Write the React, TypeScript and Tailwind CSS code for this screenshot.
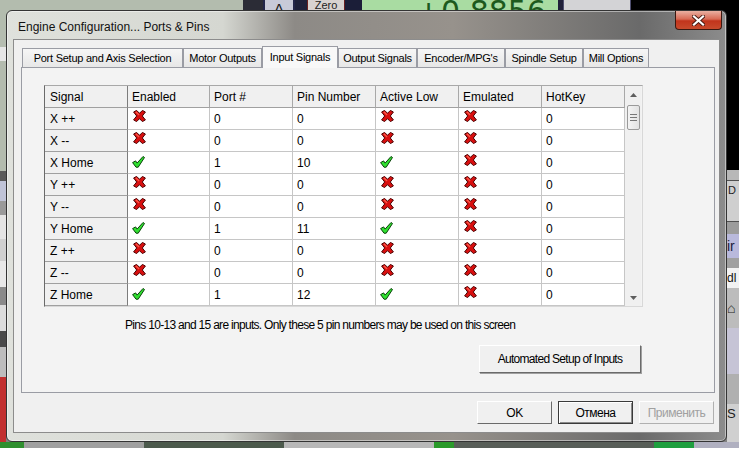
import React from "react";

type Row = {
  signal: string;
  enabled: boolean;
  port: number;
  pin: number;
  activeLow: boolean;
  emulated: boolean;
  hotKey: number;
};

const rows: Row[] = [
  { signal: "X ++", enabled: false, port: 0, pin: 0, activeLow: false, emulated: false, hotKey: 0 },
  { signal: "X --", enabled: false, port: 0, pin: 0, activeLow: false, emulated: false, hotKey: 0 },
  { signal: "X Home", enabled: true, port: 1, pin: 10, activeLow: true, emulated: false, hotKey: 0 },
  { signal: "Y ++", enabled: false, port: 0, pin: 0, activeLow: false, emulated: false, hotKey: 0 },
  { signal: "Y --", enabled: false, port: 0, pin: 0, activeLow: false, emulated: false, hotKey: 0 },
  { signal: "Y Home", enabled: true, port: 1, pin: 11, activeLow: true, emulated: false, hotKey: 0 },
  { signal: "Z ++", enabled: false, port: 0, pin: 0, activeLow: false, emulated: false, hotKey: 0 },
  { signal: "Z --", enabled: false, port: 0, pin: 0, activeLow: false, emulated: false, hotKey: 0 },
  { signal: "Z Home", enabled: true, port: 1, pin: 12, activeLow: true, emulated: false, hotKey: 0 },
];

const tabs = [
  { name: "Port Setup and Axis Selection", w: "w-[161px]" },
  { name: "Motor Outputs", w: "w-[79px]" },
  { name: "Input Signals", w: "w-[76px]", active: true },
  { name: "Output Signals", w: "w-[79px]" },
  { name: "Encoder/MPG's", w: "w-[88px]" },
  { name: "Spindle Setup", w: "w-[78px]" },
  { name: "Mill Options", w: "w-[66px]" },
];

const columns = [
  { label: "Signal", w: "w-[83px]" },
  { label: "Enabled", w: "w-[82px]" },
  { label: "Port #", w: "w-[83px]" },
  { label: "Pin Number", w: "w-[83px]" },
  { label: "Active Low", w: "w-[83px]" },
  { label: "Emulated", w: "w-[83px]" },
  { label: "HotKey", w: "w-[83px]" },
];

const RedX = () => (
  <svg width="13" height="12" viewBox="0 0 13 12">
    <polygon
      points="0.6,2 3.6,0.4 6.5,3.3 9.4,0.4 12.4,2 9.3,6 12.4,9.9 9.4,11.6 6.5,8.7 3.6,11.6 0.6,9.9 3.7,6"
      fill="#d80f0f"
      stroke="#4a0000"
      strokeWidth="1"
      strokeLinejoin="round"
    />
    <polygon points="2.2,2.2 3.6,1.5 6.5,4.6 5.8,5.6" fill="#ff5a4a" />
  </svg>
);

const GreenCheck = () => (
  <svg width="13" height="12" viewBox="0 0 13 12">
    <polygon
      points="0.6,6.6 3.6,4.9 5.1,7.1 11,0.5 12.5,1.5 6.2,11.2 4,11.2"
      fill="#30e030"
      stroke="#0a420a"
      strokeWidth="1"
      strokeLinejoin="round"
    />
  </svg>
);

const Flag = ({ on }: { on: boolean }) => (on ? <GreenCheck /> : <RedX />);

const Cell = ({
  w,
  fixed,
  icon,
  check,
  children,
}: {
  w: string;
  fixed?: boolean;
  icon?: boolean;
  check?: boolean;
  children: React.ReactNode;
}) => (
  <div
    className={`${w} h-[22px] shrink-0 border-b border-r flex ${
      icon ? (check ? "items-start pt-[4px] pl-[4px]" : "items-start pt-[2px] pl-[5px]") : "items-center pl-[4px]"
    } ${
      fixed
        ? "bg-[#f0f0f0] border-b-[#a0a0a0] border-r-[#7c7c7c] pl-[5px]"
        : "bg-white border-[#c6c6c6]"
    }`}
  >
    {children}
  </div>
);

const Arrow = ({ down }: { down?: boolean }) => (
  <svg width="7" height="4" viewBox="0 0 7 4">
    <polygon points={down ? "0,0 7,0 3.5,4" : "0,4 7,4 3.5,0"} fill="#5e5e5e" />
  </svg>
);

const Background = () => (
  <div className="h-[448px] flex flex-col">
    {/* strip above the dialog; the dialog covers its lower part */}
    <div className="h-[30px] flex">
      <div className="w-[243px] bg-[#b3bcae]" />
      <div className="w-[20px] bg-[#2b2c36]" />
      <div className="w-[32px] bg-[#c8cad8] border-x-2 border-[#23264a] flex justify-center">
        <span className="text-[15px] leading-[17px] text-[#1c1c1c]">A</span>
      </div>
      <div className="w-[12px] bg-[#1d203a]" />
      <div className="w-[38px] bg-[#d8d2d0] border-x border-[#6a2020] flex flex-col items-center">
        <span className="text-[11px] leading-[11px] text-[#222]">Zero</span>
        <span className="text-[11px] leading-[11px] text-[#222]">X</span>
      </div>
      <div className="w-[17px] bg-[#1b1e38]" />
      <div className="w-[196px] bg-[#a9dca2] flex justify-end pr-[12px]">
        <span className="text-[30px] leading-[24px] text-[#1d5a1d] font-['DejaVu_Sans',sans-serif]">
          +0.8856
        </span>
      </div>
      <div className="w-[5px] bg-[#20203a]" />
      <div className="w-[68px] bg-[#d3d3d6] border-x border-[#505070]" />
      <div className="flex-1 bg-black" />
    </div>
    <div className="flex-1 flex">
      <div className="w-[6px] flex flex-col">
        <div className="h-[17px] bg-[#b5bdb0]" />
        <div className="h-[14px] bg-[#e6e6e6]" />
        <div className="h-[110px] bg-[#b3bbae]" />
        <div className="h-[10px] bg-[#5a5a5a]" />
        <div className="h-[20px] bg-[#c0c4d8]" />
        <div className="h-[14px] bg-[#9a9a9a]" />
        <div className="h-[24px] bg-[#e4e4e4]" />
        <div className="h-[22px] bg-[#d0d0d0]" />
        <div className="h-[26px] bg-[#e8e8e8]" />
        <div className="h-[18px] bg-[#8a8a8a]" />
        <div className="h-[26px] bg-[#dcdcdc]" />
        <div className="h-[16px] bg-[#4a4a4a]" />
        <div className="h-[30px] bg-[#bdbdbd]" />
        <div className="flex-1 bg-[#c23030]" />
      </div>
      <div className="flex-1 bg-[#808080]" />
      <div className="w-[12px] flex flex-col">
        <div className="h-[140px] bg-black" />
        <div className="h-[10px] bg-[#b8b8b8]" />
        <div className="h-[42px] bg-[#cfcfcf] border-y border-[#505050] text-[11px] leading-[18px] pl-[1px] text-[#222]">D</div>
        <div className="h-[12px] bg-[#9c9c9c]" />
        <div className="h-[24px] bg-[#b9b9dc] text-[14px] leading-[24px] text-[#1a1a3a]">ir</div>
        <div className="h-[10px] bg-[#a0a0a0]" />
        <div className="h-[20px] bg-[#f2f2f2] text-[12px] leading-[20px] text-[#111]">dl</div>
        <div className="h-[40px] bg-[#bcbcbc] text-[14px] leading-[40px] text-[#222]">⌂</div>
        <div className="h-[46px] bg-[#c6c4d6]" />
        <div className="h-[30px] bg-[#b0b0b0]" />
        <div className="flex-1 bg-[#d0d0d0] text-[13px] leading-[20px] text-[#222]">S</div>
      </div>
    </div>
    <div className="h-[6px] flex">
      <div className="w-[24px] bg-[#2f8f2f]" />
      <div className="w-[120px] bg-[#a0a0a0]" />
      <div className="w-[140px] bg-[#4c5a4c]" />
      <div className="w-[150px] bg-[#b8b8b8]" />
      <div className="w-[20px] bg-[#2a9a2a]" />
      <div className="w-[200px] bg-[#585e58]" />
      <div className="w-[40px] bg-[#1f9f3f]" />
      <div className="flex-1 bg-[#b0b0c0]" />
    </div>
  </div>
);

export default function App() {
  return (
    <div className="relative w-[739px] h-[460px] bg-white overflow-hidden font-['Liberation_Sans',sans-serif] text-black">
      <Background />

      {/* Dialog window */}
      <div className="absolute left-[6px] top-[10px] w-[721px] h-[432px] rounded-[6px] border border-[#343434] bg-[linear-gradient(90deg,#dfe1dc_0%,#d5d7d1_30%,#8d8a86_40%,#97928c_62%,#6a6a6a_88%,#8c8c8c_100%)] shadow-[inset_0_0_0_1px_rgba(255,255,255,0.45)] flex flex-col">
        {/* Title bar */}
        <div className="h-[28px] flex items-start justify-between">
          <span className="self-center pl-[11px] pt-[4px] text-[12px] text-[#111]">
            Engine Configuration... Ports &amp; Pins
          </span>
          <div className="mr-[4px] w-[47px] h-[19px] rounded-b-[4px] border-x border-b border-[#3b1810] bg-[linear-gradient(180deg,#eab0a2_0%,#d86a55_45%,#c2341c_55%,#c84a2c_100%)] flex items-center justify-center">
            <svg width="13" height="11" viewBox="0 0 13 11">
              <path
                d="M2 1.5 L11 9.5 M11 1.5 L2 9.5"
                stroke="#4a1a12"
                strokeWidth="4"
                strokeLinecap="square"
              />
              <path
                d="M2 1.5 L11 9.5 M11 1.5 L2 9.5"
                stroke="#ffffff"
                strokeWidth="2.2"
                strokeLinecap="square"
              />
            </svg>
          </div>
        </div>

        {/* Client area */}
        <div className="mx-[6px] w-[707px] h-[394px] border border-[#8c8c8c] bg-[#f0f0f0] flex flex-col">
          {/* Tabs */}
          <div className="mt-[6px] ml-[8px] h-[22px] flex items-end -mb-[1px] relative z-10">
            {tabs.map((t) => (
              <div
                key={t.name}
                className={`${t.w} shrink-0 flex items-center justify-center text-[11px] tracking-[-0.25px] border border-[#9a9ca4] ${
                  t.active
                    ? "h-[22px] bg-[#f8f8f8] border-b-0"
                    : "h-[20px] bg-[linear-gradient(180deg,#f6f6f6,#e7e7e7)] border-b-[#9a9ca4]"
                }`}
              >
                {t.name}
              </div>
            ))}
          </div>

          {/* Tab page */}
          <div className="ml-[7px] w-[694px] h-[326px] border border-[#9a9ca4] bg-[#f3f3f3] pl-[22px] pt-[17px] flex flex-col">
            {/* Grid */}
            <div className="w-[599px] border border-t-[#a8a8a8] border-l-[#6a6a6a] border-r-[#d8d8d8] border-b-[#d8d8d8] flex">
              <div className="flex flex-col">
                <div className="flex">
                  {columns.map((c, i) => (
                    <div
                      key={c.label}
                      className={`${c.w} h-[22px] shrink-0 bg-[#f0f0f0] border-b border-r border-b-[#a0a0a0] ${
                        i === 0 ? "border-r-[#7c7c7c] pl-[5px]" : "border-r-[#a8a8a8] pl-[4px]"
                      } flex items-center text-[12px]`}
                    >
                      {c.label}
                    </div>
                  ))}
                </div>
                {rows.map((r) => (
                  <div key={r.signal} className="flex text-[12px]">
                    <Cell w={columns[0].w} fixed>
                      {r.signal}
                    </Cell>
                    <Cell w={columns[1].w} icon check={r.enabled}>
                      <Flag on={r.enabled} />
                    </Cell>
                    <Cell w={columns[2].w}>{r.port}</Cell>
                    <Cell w={columns[3].w}>{r.pin}</Cell>
                    <Cell w={columns[4].w} icon check={r.activeLow}>
                      <Flag on={r.activeLow} />
                    </Cell>
                    <Cell w={columns[5].w} icon check={r.emulated}>
                      <Flag on={r.emulated} />
                    </Cell>
                    <Cell w={columns[6].w}>{r.hotKey}</Cell>
                  </div>
                ))}
              </div>

              {/* Scrollbar */}
              <div className="w-[16px] bg-[#f0f0f0] flex flex-col items-center">
                <div className="h-[17px] flex items-center justify-center">
                  <Arrow />
                </div>
                <div className="mt-[2px] w-[13px] h-[25px] rounded-[2px] border border-[#9a9a9a] bg-[linear-gradient(90deg,#f4f4f4,#e2e2e2)] flex flex-col items-center justify-center gap-[2px]">
                  <div className="w-[7px] h-px bg-[#777]" />
                  <div className="w-[7px] h-px bg-[#777]" />
                  <div className="w-[7px] h-px bg-[#777]" />
                </div>
                <div className="flex-1" />
                <div className="h-[17px] flex items-center justify-center">
                  <Arrow down />
                </div>
              </div>
            </div>

            <div className="mt-[10px] ml-[81px] h-[16px] flex items-center text-[12px] tracking-[-0.7px] whitespace-nowrap">
              Pins 10-13 and 15 are inputs. Only these 5 pin numbers may be used on this screen
            </div>

            <div className="mt-[12px] ml-[435px] w-[162px] h-[28px] border border-t-white border-l-white border-r-[#6a6a6a] border-b-[#6a6a6a] bg-[#f0f0f0] shadow-[1px_1px_0_#a0a0a0] flex items-center justify-center text-[12px] tracking-[-0.7px]">
              Automated Setup of Inputs
            </div>
          </div>

          {/* Dialog buttons */}
          <div className="mt-[8px] mr-[5px] flex justify-end gap-[6px]">
            <div className="w-[75px] h-[23px] border border-t-white border-l-white border-r-[#6a6a6a] border-b-[#6a6a6a] bg-[#f0f0f0] flex items-center justify-center text-[12px] tracking-[-0.5px]">
              OK
            </div>
            <div className="w-[75px] h-[23px] border border-[#3a3a3a] bg-[#f0f0f0] shadow-[inset_1px_1px_0_#fff,inset_-1px_-1px_0_#8a8a8a] flex items-center justify-center text-[12px] tracking-[-0.5px]">
              Отмена
            </div>
            <div className="w-[75px] h-[23px] border border-t-white border-l-white border-r-[#b0b0b0] border-b-[#b0b0b0] bg-[#f0f0f0] flex items-center justify-center text-[12px] tracking-[-0.5px] text-[#a0a0a0]">
              Применить
            </div>
          </div>
        </div>
      </div>
    </div>
  );
}
